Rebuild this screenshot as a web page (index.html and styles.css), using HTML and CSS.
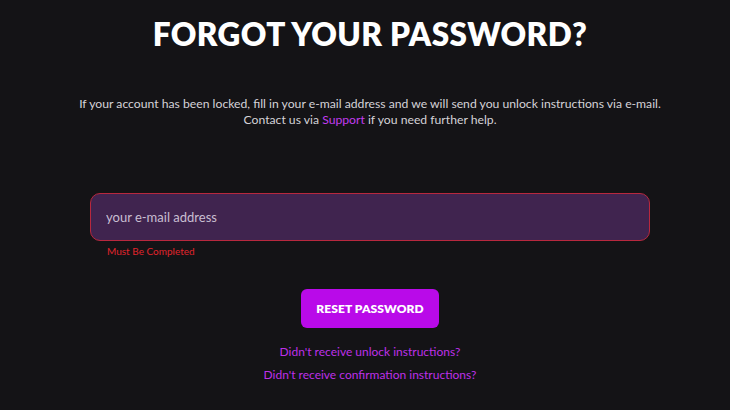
FILE: index.html
```html
<!DOCTYPE html>
<html>
<head>
<meta charset="utf-8">
<link rel="stylesheet" href="styles.css">
</head>
<body>
<main class="page">
  <h1 class="title">FORGOT YOUR PASSWORD?</h1>
  <p class="intro">If your account has been locked, fill in your e-mail address and we will send you unlock instructions via e-mail.<br>Contact us via <a class="link" href="#">Support</a> if you need further help.</p>
  <form class="form">
    <div class="field">
      <input class="input" type="text" placeholder="your e-mail address">
      <div class="error">Must Be Completed</div>
    </div>
    <button class="btn" type="button">RESET PASSWORD</button>
    <a class="alt" href="#">Didn't receive unlock instructions?</a>
    <a class="alt" href="#">Didn't receive confirmation instructions?</a>
  </form>
</main>
</body>
</html>
```
FILE: styles.css
```css
html, body {
  margin: 0;
  padding: 0;
  background: #141316;
  height: 100%;
}
body {
  font-family: Lato, "Liberation Sans", sans-serif;
  color: #d8d6dc;
}
.page {
  display: flex;
  flex-direction: column;
  align-items: center;
  padding: 14px 0 0 10px;
}
.title {
  margin: 0;
  font-size: 31.5px;
  font-weight: 800;
  color: #ffffff;
  letter-spacing: 0.4px;
  line-height: 40px;
}
.intro {
  margin: 42px 0 0;
  font-size: 12.2px;
  line-height: 16px;
  text-align: center;
  color: #d4d2d8;
}
.link {
  color: #c23cf0;
  text-decoration: none;
}
.form {
  display: flex;
  flex-direction: column;
  align-items: center;
  margin-top: 65px;
}
.field {
  width: 560px;
  display: flex;
  flex-direction: column;
}
.input {
  box-sizing: border-box;
  width: 560px;
  height: 48px;
  border: 1px solid #b8283e;
  border-radius: 10px;
  background: #40244f;
  padding: 0 15px;
  font-family: inherit;
  font-size: 13px;
  color: #d8d0e0;
  outline: none;
}
.input::placeholder {
  color: #c9bfd2;
}
.error {
  margin: 4px 0 0 17px;
  font-size: 10px;
  line-height: 13px;
  color: #e0242c;
}
.btn {
  margin-top: 31px;
  width: 138px;
  height: 39px;
  border: none;
  border-radius: 6px;
  background: #b90ae9;
  color: #ffffff;
  font-family: inherit;
  font-weight: 800;
  font-size: 12px;
  letter-spacing: 0.1px;
}
.alt {
  margin-top: 9px;
  font-size: 12px;
  line-height: 14px;
  color: #be30e8;
  text-decoration: none;
}
.btn + .alt {
  margin-top: 17px;
}
```
